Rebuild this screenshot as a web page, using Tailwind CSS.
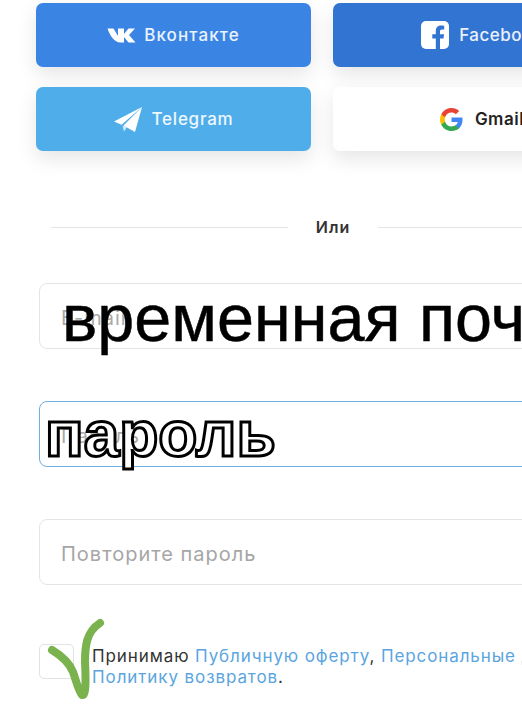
<!DOCTYPE html>
<html lang="ru">
<head>
<meta charset="utf-8">
<script src="https://cdn.jsdelivr.net/npm/@tailwindcss/browser@4"></script>
</head>
<body class="bg-white">
<main class="relative w-[522px] h-[724px] overflow-hidden bg-white font-['Inter',sans-serif]">
  <div class="w-[700px] pl-[36px] pt-[3px]">
    <div class="grid grid-cols-[275px_298px] gap-x-[22px] gap-y-[20px]">
      <div class="h-[64px] rounded-[7px] bg-[#3a84e4] shadow-[0_8px_20px_rgba(0,0,0,0.10)] flex items-center justify-center gap-[8px] text-white/90 text-[17px] tracking-[1.1px] font-medium">
        <svg width="29" height="15" viewBox="0 0 28 15" fill="#fff"><path d="M0 0.5h6l4.5 7.5V.5h6v5.6L21 .5h6.5L21.5 7 28 14.500h-7l-4.500-5.500v5.500h-3.500C7 14.500 2.500 8 0 .5z"/></svg>
        <span class="pt-[2px]">Вконтакте</span>
      </div>
      <div class="h-[64px] rounded-[7px] bg-[#3274d2] shadow-[0_8px_20px_rgba(0,0,0,0.10)] flex items-center justify-center gap-[10px] text-white/90 text-[17px] tracking-[0.5px] font-medium">
        <svg width="28" height="28" viewBox="0 0 28 28"><rect width="28" height="28" rx="5" fill="#fff"/><path d="M19 28V17.500h3.500l.6-4.200H19v-2.600c0-1.300.4-2.100 2.200-2.100h2V4.800c-.6-.1-1.800-.2-3.100-.2-3.200 0-5.300 1.900-5.300 5.500v3.200h-3.500v4.200h3.500V28z" fill="#3274d2"/></svg>
        <span class="pt-[2px]">Facebook</span>
      </div>
      <div class="h-[64px] rounded-[7px] bg-[#4fadea] shadow-[0_8px_20px_rgba(0,0,0,0.10)] flex items-center justify-center gap-[10px] text-white/90 text-[17px] tracking-[0.75px] font-medium">
        <svg width="28" height="25" viewBox="0 0 28 25" fill="#fff"><path d="M28 0 0 14.500l7.500 3.200z"/><path d="M28 0 9.500 18.500 21 25z"/><path d="M8.500 18.500 10 24.500l2.800-4.200z" opacity="0.75"/></svg>
        <span class="pt-[2px]">Telegram</span>
      </div>
      <div class="h-[64px] rounded-[7px] bg-white shadow-[0_8px_20px_rgba(0,0,0,0.10)] flex items-center justify-center gap-[12px] text-[#222] text-[17px] tracking-[0.5px] font-semibold">
        <svg width="23" height="23" viewBox="0 0 24 24"><path fill="#4285F4" d="M23.500 12.300c0-.8-.1-1.600-.2-2.300H12v4.500h6.500c-.3 1.500-1.100 2.800-2.400 3.600v3h3.900c2.200-2.100 3.500-5.100 3.500-8.800z"/><path fill="#34A853" d="M12 24c3.200 0 6-1.100 8-2.900l-3.900-3c-1.100.7-2.500 1.200-4.100 1.200-3.100 0-5.800-2.100-6.700-5H1.300v3.100C3.300 21.300 7.300 24 12 24z"/><path fill="#FBBC05" d="M5.300 14.300c-.5-1.500-.5-3.100 0-4.600V6.600h-4c-1.700 3.400-1.700 7.400 0 10.800z"/><path fill="#EA4335" d="M12 4.800c1.800 0 3.400.6 4.600 1.800l3.400-3.400C18 1.200 15.200 0 12 0 7.300 0 3.300 2.700 1.300 6.600l4 3.100c.9-2.800 3.600-4.900 6.700-4.900z"/></svg>
        <span class="pt-[2px]">Gmail</span>
      </div>
    </div>
  </div>

  <div class="flex items-center w-[640px] pl-[51px] mt-[64px] h-[24px]">
    <div class="w-[237px] h-px bg-[#e4e4e4]"></div>
    <span class="w-[90px] text-center text-[16px] tracking-[1px] font-semibold text-[#333]">Или</span>
    <div class="flex-1 h-px bg-[#e4e4e4]"></div>
  </div>

  <div class="w-[640px] pl-[39px] mt-[44px] flex flex-col gap-[52px]">
    <div class="h-[66px] rounded-[8px] border border-[#e4e4e4] bg-white flex items-center pl-[21px] pt-[3px] text-[20px] tracking-[1px] text-[#aaa]">E-mail</div>
    <div class="h-[66px] rounded-[8px] border-[1.5px] border-[#6fb0e0] bg-white flex items-center pl-[21px] pt-[3px] text-[20px] tracking-[1px] text-[#aaa]">Пароль</div>
    <div class="h-[66px] rounded-[8px] border border-[#e4e4e4] bg-white flex items-center pl-[21px] pt-[3px] text-[20px] tracking-[1px] text-[#a6a6a6]">Повторите пароль</div>
  </div>

  <div class="w-[640px] pl-[39px] mt-[59px] flex items-start gap-[18px]">
    <div class="w-[35px] h-[35px] rounded-[5px] border border-[#e2e2e2] bg-white shrink-0"></div>
    <p class="text-[17px] tracking-[0.9px] leading-[21px] text-[#333] w-[580px] mt-[2px]">Принимаю <span class="text-[#5aa5e0]">Публичную оферту</span>, <span class="text-[#5aa5e0]">Персональные данные</span> и<br><span class="text-[#5aa5e0]">Политику возвратов</span>.</p>
  </div>

  <div class="absolute left-[62px] top-[278px] whitespace-nowrap font-['Liberation_Sans',sans-serif] text-[66.5px] leading-[80px] text-black [-webkit-text-stroke:0.5px_#000]">временная почта</div>
  <div class="absolute left-[45px] top-[398px] whitespace-nowrap font-['Liberation_Sans',sans-serif] font-bold text-[64px] leading-[72px] text-white [-webkit-text-stroke:3px_#000]">пароль</div>

  <svg class="absolute left-[45px] top-[612px]" width="65" height="95" viewBox="0 0 65 95" fill="none"><path d="M7 38C17 44 24 50 28 60C31 68 33 78 37 83C41 84 41 70 40 50C40 35 41 20 55 11" stroke="#7ab24e" stroke-width="8" stroke-linecap="round" stroke-linejoin="round"/></svg>
</main>
</body>
</html>
